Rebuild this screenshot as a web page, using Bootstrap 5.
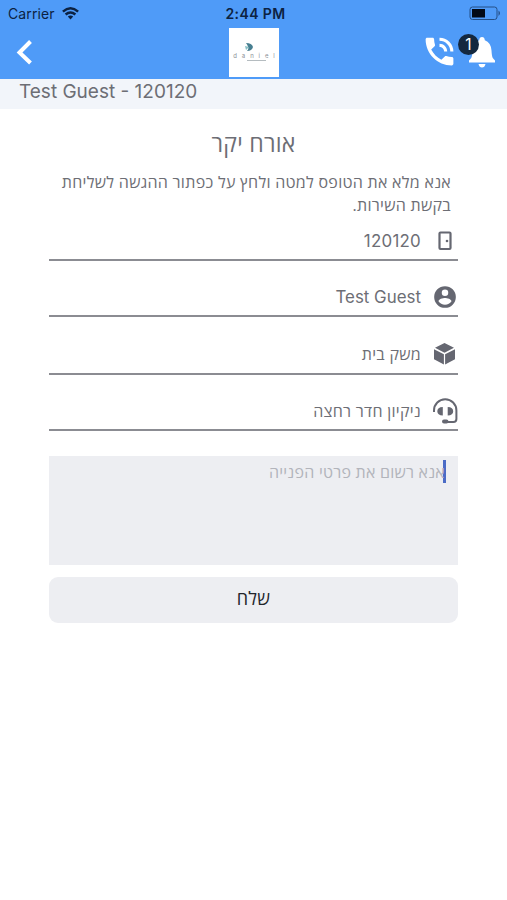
<!DOCTYPE html>
<html lang="he">
<head>
<meta charset="utf-8">
<meta name="viewport" content="width=device-width, initial-scale=1">
<title>Service request</title>
<link href="https://cdn.jsdelivr.net/npm/bootstrap@5.3.0/dist/css/bootstrap.min.css" rel="stylesheet">
<style>
body{font-family:Inter,"Open Sans","Liberation Sans",sans-serif;color:#6d6e75;background:#fff;min-height:900px;overflow:hidden}
svg{display:block;flex:none}
.he{font-family:"Open Sans","Liberation Sans",sans-serif;letter-spacing:.28px}
.app-top{background:#4f9bf8;height:79px}
.status{height:27px;padding:0 4px 0 8px;font-size:14px;color:#0c2242;line-height:27px}
.status>*{flex:1 1 0}
.carrier{letter-spacing:.1px}
.wifi{margin-left:-1px}
.clock{font-weight:600;font-size:14px;letter-spacing:.4px}
.toolbar{height:52px;padding:0 10px}
.toolbar>*{flex:1 1 0}
.chevron{margin-left:4px}
.logo{flex:0 0 50px;height:49px;background:#fff;margin-bottom:1px}
.logo-mark{margin:0 11px 1px 0}
.logo-name{font-size:6px;letter-spacing:4.9px;line-height:7px;color:#8b9096;margin-right:-5px}
.logo-sub{width:19px;height:1px;background:#b5bcc0;margin:1px 0 1px 4px}
.actions{margin:0 -1px 3px 0}
.bell{margin-left:8px}
.count{left:-8px;top:-1px;width:21px;height:21px;background:#14283f;font-size:15.5px;line-height:21px}
.guest{height:30px;background:#f2f5fa;padding-left:19px;font-size:19px;line-height:25px}
.form-area{margin:0 49px}
.title{font-size:23px;line-height:30px;margin-top:19px}
.intro{font-size:16px;line-height:22.5px;padding:0 7px 0 0;margin-top:13px}
.field{border-bottom:2px solid #8b8c92;padding-right:37px;font-size:16px;position:relative}
.field svg{position:absolute;right:0;bottom:5px}
.latin{font-size:16.9px}
.f1,.f2{padding-bottom:5px}.f4{padding-bottom:6px}
.f1{height:45px}.f2,.f4{height:56px}.f3{height:58px;padding-bottom:7px}
.f1 .latin{letter-spacing:.25px}
.message{margin-top:25px;height:109px;background:#edeef2;padding:4px 12px;font-size:16px;line-height:24px;color:#b2b4bb;letter-spacing:.23px}
.caret{width:3px;height:23px;background:#4b6bc6;margin-left:-2px}
.send{margin-top:12px;height:46px;background:#edeef2;border-radius:9px;font-size:18px;color:#22252c;padding:0 0 4px}
</style>
</head>
<body>
<header class="app-top">
  <div class="status d-flex align-items-center">
    <div class="d-flex align-items-center gap-2"><span class="carrier">Carrier</span>
      <svg class="wifi" width="17" height="13" viewBox="0 0 17 13" fill="none" stroke="#0c2242" stroke-width="2.5"><path d="M.9 4.6Q8.5-2 16.1 4.6M3.6 7.5Q8.5 3.4 13.4 7.5"/><path d="M5.8 9.6Q8.5 7.5 11.2 9.6L8.5 12.6Z" fill="#0c2242" stroke="none"/></svg>
    </div>
    <div class="clock text-center">2:44 PM</div>
    <div class="d-flex justify-content-end">
      <svg width="34" height="15" viewBox="0 0 34 15"><rect x="1" y="1" width="27" height="12.500" rx="2.500" fill="none" stroke="#244f86"/><rect x="3" y="3" width="13" height="8.500" fill="#020a17"/><path d="M29.500 4.500q3 2.700 0 5.500z" fill="#244f86"/></svg>
    </div>
  </div>
  <div class="toolbar d-flex align-items-center">
    <div><svg class="chevron" width="20" height="26" viewBox="0 0 20 26" fill="none" stroke="#fff" stroke-width="4"><path d="M16.500 1.500 5.500 12.500l11 10.500"/></svg></div>
    <div class="logo d-flex flex-column align-items-center justify-content-center overflow-hidden">
      <svg class="logo-mark" width="8" height="8" viewBox="0 0 8 8"><path d="M1 0Q7 0 8 4 7 8 2 8 5 5 1 0" fill="#477f91"/><path d="M0 3l4 1-3 3z" fill="#86c0c5"/></svg>
      <span class="logo-name">daniel</span><span class="logo-sub"></span>
    </div>
    <div class="actions d-flex justify-content-end align-items-center">
      <svg width="37" height="37" viewBox="0 0 24 24" fill="#fff"><path d="M20 15.500c-1.250 0-2.450-.2-3.570-.57-.35-.11-.74-.03-1.020.24l-2.200 2.200c-2.830-1.440-5.150-3.750-6.590-6.590l2.200-2.200c.28-.28.36-.67.25-1.020A11.360 11.360 0 0 1 8.500 4c0-.55-.45-1-1-1H4c-.55 0-1 .45-1 1 0 9.390 7.610 17 17 17 .55 0 1-.45 1-1v-3.500c0-.55-.45-1-1-1zM19 12h2a9 9 0 0 0-9-9v2c3.870 0 7 3.130 7 7zm-4 0h2c0-2.760-2.240-5-5-5v2c1.660 0 3 1.340 3 3z"/></svg>
      <div class="position-relative bell">
        <svg width="32" height="34" viewBox="0 0 32 34" fill="#fff"><path d="M12.500 29h7q-.8 3.500-3.500 3.500T12.500 29zM16 2q2.500 0 2.800 3.200 6.200 2.300 6.700 10.300.3 6 1.300 7.500 1 1.500 2.200 2.400V27.500H3V25.400q1.200-.9 2.200-2.400 1-1.500 1.300-7.500.5-8 6.700-10.300Q13.500 2 16 2z"/></svg>
        <span class="count position-absolute rounded-circle text-white text-center">1</span>
      </div>
    </div>
  </div>
</header>
<div class="guest">Test Guest - 120120</div>
<main class="form-area" dir="rtl">
  <h1 class="title he text-center fw-normal mb-0">אורח יקר</h1>
  <p class="intro he mb-0">אנא מלא את הטופס למטה ולחץ על כפתור ההגשה לשליחת<br>בקשת השירות.</p>
  <div class="field f1 d-flex align-items-end">
    <svg width="26" height="26" viewBox="0 0 26 26" fill="none" stroke="#656771" stroke-width="2.2"><rect x="7.500" y="4.500" width="11" height="16.500" rx="1"/><circle cx="15" cy="13" r="1.300" fill="#656771" stroke="none"/></svg>
    <span class="latin" dir="ltr">120120</span>
  </div>
  <div class="field f2 d-flex align-items-end">
    <svg width="26" height="26" viewBox="0 0 24 24" fill="#656771"><path d="M12 2a10 10 0 1 0 0 20 10 10 0 0 0 0-20zm0 3a3 3 0 1 1 0 6 3 3 0 0 1 0-6zm0 14.200a7.200 7.200 0 0 1-6-3.220c.03-1.990 4-3.080 6-3.080s5.970 1.090 6 3.080a7.200 7.200 0 0 1-6 3.220z"/></svg>
    <span class="latin" dir="ltr">Test Guest</span>
  </div>
  <div class="field f3 he d-flex align-items-end">
    <svg width="26" height="26" viewBox="0 0 26 26" fill="#656771"><path d="M12.500 1 22 5.800 12.500 10.700 3 5.800zM2 7.200 11.900 12.200V22.500L2 17.300zM23 7.200 13.100 12.200V22.500L23 17.300z"/></svg>
    <span>משק בית</span>
  </div>
  <div class="field f4 he d-flex align-items-end">
    <svg width="26" height="26" viewBox="0 0 26 26" fill="none" stroke="#656771" stroke-width="2"><path d="M2 14v-1.500a11.200 11.200 0 0 1 22.400 0v8.500q0 3-3 3h-7"/><path d="M10.800 9v8.500q-5.500-.3-5.500-4.300T10.800 9zM15.700 9v8.500q5.500-.3 5.500-4.300T15.700 9z" fill="#656771" stroke="none"/><rect x="10" y="21.500" width="6.500" height="4" rx="2" fill="#656771" stroke="none"/></svg>
    <span>ניקיון חדר רחצה</span>
  </div>
  <div class="message he d-flex align-items-start"><span class="caret"></span><span>אנא רשום את פרטי הפנייה</span></div>
  <button class="send he btn w-100 d-block border-0" type="button">שלח</button>
</main>
<script src="https://cdn.jsdelivr.net/npm/bootstrap@5.3.0/dist/js/bootstrap.bundle.min.js"></script>
</body>
</html>
